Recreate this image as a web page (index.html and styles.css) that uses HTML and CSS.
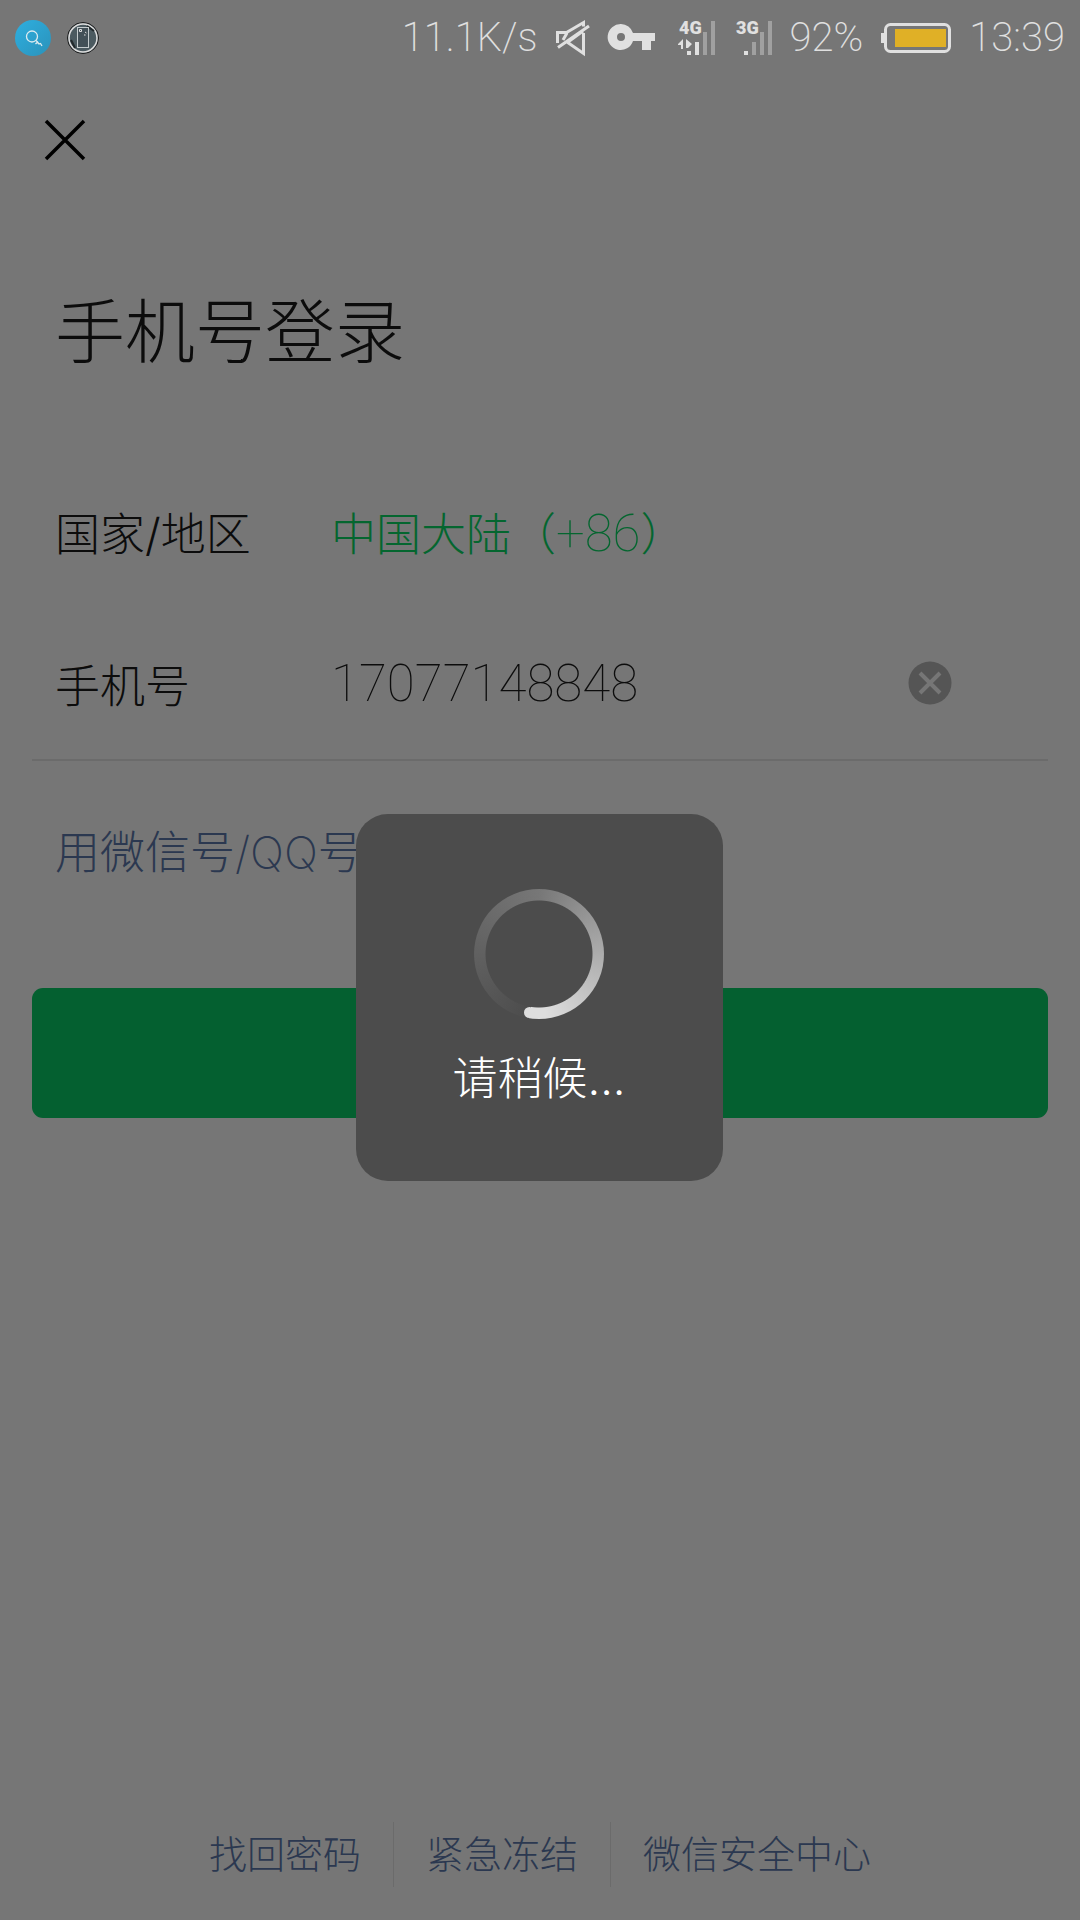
FILE: index.html
```html
<!DOCTYPE html>
<html lang="zh-CN">
<head>
<meta charset="utf-8">
<meta name="viewport" content="width=device-width">
<title>手机号登录</title>
<link rel="stylesheet" href="styles.css">
</head>
<body>
<div class="screen">
  <header class="status">
    <svg width="36" height="36" viewBox="0 0 36 36" aria-hidden="true">
      <defs><linearGradient id="sky" x1="0" y1="0" x2="1" y2="1"><stop offset="0" stop-color="#2eafe0"/><stop offset="1" stop-color="#2b92ba"/></linearGradient></defs>
      <circle cx="18" cy="18" r="18" fill="url(#sky)"/>
      <g fill="none" stroke="#dcebf0" stroke-width="1.3"><circle cx="17" cy="16.500" r="5.500"/><path d="M21 20.500l2 2M20.500 24l2-2 1.500 2 1.500-.5 1.500 2.500"/></g>
    </svg>
    <svg width="32" height="32" viewBox="0 0 32 32" aria-hidden="true">
      <circle cx="16" cy="16" r="15.500" fill="#4b5a60" stroke="#1c1c1c"/>
      <circle cx="16" cy="16" r="14" fill="none" stroke="#dcdcdc" stroke-width="1.500"/>
      <path d="M4 18l4 8M20 4l7 5" stroke="#20282b" stroke-width="2"/>
      <rect x="10.500" y="5.500" width="11" height="20" fill="#425057" stroke="#c4cbcd"/>
      <path d="M12.500 7.500h2v2h-2zM18 10l1.500 1M17 13h1.500" fill="none" stroke="#e0e0e0"/>
    </svg>
    <div class="status-right">
      <span>11.1K/s</span>
      <svg width="34" height="34" viewBox="0 0 34 34" fill="none" stroke="#e0e0e0" stroke-width="3" aria-label="静音">
        <path d="M1.500 22V11.500h9L27.500 1.500v4M7 19l4-7M27.500 12v20.500L11 21M2 26.500L33 5M12 21L27 10"/>
      </svg>
      <svg width="47" height="27" viewBox="0 0 47 27" fill="#e0e0e0" fill-rule="evenodd" aria-label="VPN">
        <path d="M13 0a13 13 0 0 1 12 9h22v8h-4v9h-9v-9h-9A13 13 0 1 1 13 0zm0 9a4 4 0 1 0 0 8 4 4 0 0 0 0-8z"/>
      </svg>
      <svg class="signal" width="37" height="34" viewBox="0 0 37 34" aria-label="4G">
        <text x="1" y="13">4G</text>
        <path d="M0 23l5-5v10h-2v-4H0zM8 18l6 5-4 4H8zM9 30h4v4H9zM17 21h4v13h-4z" fill="#e0e0e0"/>
        <path d="M25 11h4v23h-4zM33 0h4v34h-4z" fill="#a0a0a0"/>
      </svg>
      <svg class="signal" width="34" height="34" viewBox="0 0 34 34" aria-label="3G">
        <text x="-2" y="13">3G</text>
        <path d="M6 30h4v4H6z" fill="#e0e0e0"/>
        <path d="M14 21h4v13h-4zM22 11h4v23h-4zM30 0h4v34h-4z" fill="#a0a0a0"/>
      </svg>
      <span>92%</span>
      <svg width="70" height="30" viewBox="0 0 70 30" aria-hidden="true">
        <rect x="4.500" y="1.500" width="64" height="27" rx="5" fill="none" stroke="#e0e0e0" stroke-width="3"/>
        <path d="M0 10h4v10H0z" fill="#e0e0e0"/><path d="M14 6h51v18H14z" fill="#e0b026"/>
      </svg>
      <time>13:39</time>
    </div>
  </header>

  <button class="close" type="button" aria-label="关闭">
    <svg width="40" height="40" viewBox="0 0 40 40" fill="none" stroke="#000" stroke-width="3.500"><path d="M1 1l38 38M39 1L1 39"/></svg>
  </button>

  <main class="content">
    <h1 class="title">手机号登录</h1>
    <form class="form">
      <div class="field">
        <label class="label" for="region">国家/地区</label>
        <button class="region" id="region" type="button">中国大陆（<span class="code">+86</span>）</button>
      </div>
      <div class="field field-phone">
        <label class="label" for="phone">手机号</label>
        <input class="phone" id="phone" type="tel" value="17077148848">
        <button class="clear" type="button" aria-label="清除">
          <svg width="44" height="44" viewBox="0 0 44 44"><circle cx="22" cy="22" r="21.500" fill="#555"/><path d="M12 12l20 20M32 12L12 32" stroke="#767676" stroke-width="4"/></svg>
        </button>
      </div>
      <a class="switch" href="#">用微信号/QQ号登录</a>
      <button class="submit" type="submit" aria-label="下一步"></button>
    </form>
  </main>

  <footer class="links">
    <a href="#">找回密码</a>
    <a href="#">紧急冻结</a>
    <a href="#">微信安全中心</a>
  </footer>
</div>

<div class="overlay">
  <div class="toast" role="status">
    <div class="spinner"></div>
    <p class="toast-text">请稍候...</p>
  </div>
</div>
</body>
</html>
```
FILE: styles.css
```css
* { box-sizing: border-box; }

body {
  margin: 0;
  background: #767676;
  color: #0c0c0c;
  font-family: Inter, "Noto Sans CJK SC", sans-serif;
  font-size: 45px;
  font-weight: 200;
}

button, input {
  margin: 0;
  padding: 0;
  border: 0;
  background: none;
  color: inherit;
  font: inherit;
}

a { color: #2b3850; text-decoration: none; }
svg { display: block; flex: none; overflow: visible; }

.screen { display: flex; flex-direction: column; min-height: 100vh; }

.status {
  display: flex;
  align-items: center;
  gap: 16px;
  height: 75px;
  padding: 0 15px;
  color: #e0e0e0;
  font-family: Roboto, sans-serif;
  font-size: 40px;
}
.status-right { display: flex; align-items: center; gap: 18px; margin-left: auto; }
.signal { margin-left: 5px; }
.signal text { fill: #e0e0e0; font: 900 18px Roboto, sans-serif; }

.close { align-self: flex-start; margin: 33px 0 0 33px; padding: 12px; }

.content { padding: 0 32px; }
.title {
  margin: 111px 0 0;
  padding: 0 23px;
  font-size: 70px;
  font-weight: 300;
  line-height: 100px;
}

.form { display: flex; flex-direction: column; margin-top: 72px; }
.field { display: flex; align-items: center; height: 152px; padding: 0 96px 0 23px; }
.field-phone { height: 154px; border-bottom: 2px solid #6b6b6b; }
.label { width: 276px; font-weight: 300; }
.region { color: #04662f; font-weight: 300; }
.code, .phone { font-family: Roboto, sans-serif; font-size: 51px; font-weight: 100; }
.phone { flex: 1; min-width: 0; outline: 0; }

.switch { align-self: flex-start; margin-top: 60px; padding: 0 23px; line-height: 64px; }
.submit {
  height: 130px;
  margin-top: 103px;
  border-radius: 11px;
  background: #046030;
}

.links {
  display: flex;
  justify-content: center;
  margin-top: auto;
  padding-bottom: 33px;
  font-size: 38px;
  line-height: 65px;
}
.links a { padding: 0 32px; }
.links a + a { border-left: 1px solid #6b6b6b; }

.overlay {
  position: fixed;
  inset: 75px 1px 0 0;
  display: grid;
  place-items: center;
}
.toast {
  display: flex;
  flex-direction: column;
  align-items: center;
  width: 367px;
  height: 367px;
  padding: 75px 1px 0 0;
  border-radius: 32px;
  background: #4c4c4c;
  color: #fff;
}
.spinner {
  position: relative;
  width: 130px;
  height: 130px;
  border-radius: 50%;
  background:
    radial-gradient(circle closest-side, #4c4c4c 53px, transparent 54px),
    conic-gradient(from 189deg, #4c4c4c, #777 171deg, #dedede 345deg, #dedede);
}
.spinner::after {
  content: "";
  position: absolute;
  left: 50px;
  bottom: 1px;
  width: 11px;
  height: 11px;
  border-radius: 50%;
  background: #dedede;
}
.toast-text { margin: 28px 0 0; font-weight: 300; line-height: 64px; }
```
